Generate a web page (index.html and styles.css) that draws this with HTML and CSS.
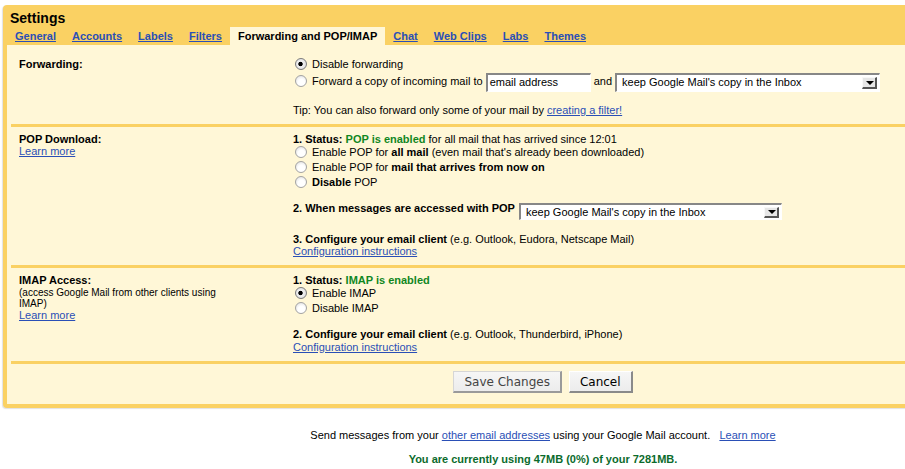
FILE: index.html
```html
<!DOCTYPE html>
<html>
<head>
<meta charset="utf-8">
<title>Settings</title>
<link rel="stylesheet" href="styles.css">
</head>
<body>
<div class="box">
  <h1 class="title">Settings</h1>
  <div class="tabs">
    <a class="tab" href="#">General</a>
    <a class="tab" href="#">Accounts</a>
    <a class="tab" href="#">Labels</a>
    <a class="tab" href="#">Filters</a>
    <span class="tab active">Forwarding and POP/IMAP</span>
    <a class="tab" href="#">Chat</a>
    <a class="tab" href="#">Web Clips</a>
    <a class="tab" href="#">Labs</a>
    <a class="tab" href="#">Themes</a>
  </div>
  <div class="panel">
    <div class="section sec-fwd">
      <div class="label l16"><b>Forwarding:</b></div>
      <div class="opts">
        <div class="row r16"><span class="radio on"></span>Disable forwarding</div>
        <div class="row r19"><span class="radio"></span>Forward a copy of incoming mail to <span class="field input-email">email address</span> and <span class="field select sel-fwd"><span class="sel-text">keep Google Mail's copy in the Inbox</span><span class="arrow"></span></span></div>
        <div class="tip">Tip: You can also forward only some of your mail by <a href="#">creating a filter!</a></div>
      </div>
    </div>

    <div class="section sec-pop">
      <div class="label">
        <div class="l12"><b>POP Download:</b></div>
        <div class="l12"><a href="#">Learn more</a></div>
      </div>
      <div class="opts">
        <div class="l12"><b>1. Status: <span class="ok">POP is enabled</span></b> for all mail that has arrived since 12:01</div>
        <div class="row r15"><span class="radio"></span>Enable POP for <b>all mail</b> (even mail that's already been downloaded)</div>
        <div class="row r15"><span class="radio"></span>Enable POP for <b>mail that arrives from now on</b></div>
        <div class="row r15"><span class="radio"></span><b>Disable</b> POP</div>
        <div class="pop-row">
          <b class="l13">2. When messages are accessed with POP</b>
          <span class="field select sel-pop"><span class="sel-text">keep Google Mail's copy in the Inbox</span><span class="arrow"></span></span>
        </div>
        <div class="l12 cfg"><b>3. Configure your email client</b> (e.g. Outlook, Eudora, Netscape Mail)</div>
        <div class="l12"><a href="#">Configuration instructions</a></div>
      </div>
    </div>

    <div class="section sec-imap">
      <div class="label">
        <div class="l12"><b>IMAP Access:</b></div>
        <div class="small">(access Google Mail from other clients using IMAP)</div>
        <div class="l12"><a href="#">Learn more</a></div>
      </div>
      <div class="opts">
        <div class="l12"><b>1. Status: <span class="ok">IMAP is enabled</span></b></div>
        <div class="row r15"><span class="radio on"></span>Enable IMAP</div>
        <div class="row r15"><span class="radio"></span>Disable IMAP</div>
        <div class="l13 cfg2"><b>2. Configure your email client</b> (e.g. Outlook, Thunderbird, iPhone)</div>
        <div class="l13"><a href="#">Configuration instructions</a></div>
      </div>
    </div>

    <div class="actions">
      <button class="btn btn-save" type="button">Save Changes</button>
      <button class="btn" type="button">Cancel</button>
    </div>
  </div>
</div>

<div class="footer">
  <div class="send">Send messages from your <a href="#">other email addresses</a> using your Google Mail account. &nbsp; <a href="#">Learn more</a></div>
  <div class="usage">You are currently using 47MB (0%) of your 7281MB.</div>
</div>
</body>
</html>
```

FILE: styles.css
```css
html, body {
  margin: 0;
  padding: 0;
  overflow: hidden;
  background: #fff;
}

body {
  font-family: "Liberation Sans", Arial, Helvetica, sans-serif;
  font-size: 11px;
  color: #000;
}

a {
  color: #2a4fb6;
  text-decoration: underline;
}

.box {
  width: 1072px;
  margin: 5px 0 0 3px;
  padding: 4px 4px 4px 4px;
  background: #fad163;
  border-radius: 4px;
  box-shadow: -1px 1px 1px rgba(0, 0, 0, 0.12);
}

.title {
  margin: 0;
  padding-left: 3px;
  font-size: 14px;
  line-height: 18px;
  font-weight: bold;
}

.tabs {
  display: flex;
  height: 18px;
  line-height: 18px;
  font-weight: bold;
}

.tab {
  padding: 0 8px;
  white-space: nowrap;
}

.tab.active {
  background: #fff7d7;
  color: #000;
}

.panel {
  background: #fff7d7;
}

.section {
  display: grid;
  grid-template-columns: 274px 1fr;
  margin: 0 4px;
  padding-left: 8px;
  border-bottom: 3px solid #fad163;
}

.sec-fwd {
  padding-top: 11px;
  padding-bottom: 6px;
}

.sec-pop {
  padding-top: 6px;
  padding-bottom: 8px;
}

.sec-imap {
  padding-top: 6px;
  padding-bottom: 7px;
}

.l12 { line-height: 12px; }
.l13 { line-height: 13px; }
.l16 { line-height: 16px; }

.row {
  display: block;
  white-space: nowrap;
}

.r15 { line-height: 15px; height: 15px; }
.r16 { line-height: 16px; height: 16px; }
.r19 { line-height: 19px; height: 19px; }

.radio {
  display: inline-block;
  box-sizing: border-box;
  width: 12px;
  height: 12px;
  margin: -2px 5px 0 2px;
  border-radius: 50%;
  border: 1px solid #a3a3a3;
  background: radial-gradient(circle at 55% 65%, #ffffff 0, #ffffff 40%, #ececec 70%, #cfcfcf 100%);
  vertical-align: middle;
}

.radio.on {
  border-color: #7d7d7d;
  background: radial-gradient(circle at 45% 50%, #000 0, #000 1.8px, #f2f2f2 2.6px, #e4e4e4 65%, #b8b8b8 100%);
}

.tip {
  margin-top: 11px;
  line-height: 16px;
}

.field {
  display: inline-flex;
  align-items: center;
  box-sizing: border-box;
  vertical-align: middle;
  background: #fff;
  border-style: solid;
  border-width: 2px 1px 1px 2px;
  border-color: #878787 #ffffff #ffffff #878787;
  font-size: 11px;
  line-height: 13px;
  white-space: nowrap;
}

.input-email {
  width: 105px;
  height: 19px;
  padding-left: 2px;
}

.select {
  justify-content: space-between;
  padding: 0 2px 0 5px;
}

.sel-fwd {
  width: 265px;
  height: 19px;
}

.sel-pop {
  width: 263px;
  height: 17px;
}

.arrow {
  position: relative;
  box-sizing: border-box;
  width: 15px;
  height: 12px;
  background: #e6e6e6;
  border-style: solid;
  border-width: 1px 2px 2px 1px;
  border-color: #f8f8f8 #555555 #555555 #f8f8f8;
}

.arrow::after {
  content: "";
  position: absolute;
  left: 3px;
  top: 3px;
  border-style: solid;
  border-width: 4px 4px 0 4px;
  border-color: #000 transparent transparent transparent;
}

.sel-pop .arrow {
  height: 11px;
}

.sel-pop .arrow::after {
  top: 2px;
}

.ok {
  color: #11871f;
}

.pop-row {
  display: flex;
  align-items: flex-start;
  gap: 4px;
  margin-top: 12px;
  height: 18px;
  white-space: nowrap;
}

.pop-row .select {
  margin-top: 1px;
}

.cfg {
  margin-top: 13px;
}

.cfg2 {
  margin-top: 12px;
}

.small {
  max-width: 215px;
  margin-top: 1px;
  font-size: 10px;
  line-height: 11px;
}

.actions {
  display: flex;
  justify-content: center;
  gap: 7px;
  margin: 0 4px;
  padding: 7px 0 11px;
}

.btn {
  box-sizing: border-box;
  height: 22px;
  margin: 0;
  padding: 0 10px;
  font-family: "DejaVu Sans", "Lucida Grande", sans-serif;
  font-size: 12px;
  line-height: 18px;
  color: #000;
  background: linear-gradient(#f6f6f6, #ececec);
  border-style: solid;
  border-width: 1px 2px 2px 1px;
  border-color: #ffffff #8a8a8a #8a8a8a #ffffff;
  border-radius: 0;
}

.btn-save {
  color: #444;
  border-color: #d6d6d6 #9a9a9a #9a9a9a #d6d6d6;
}

.footer {
  width: 1080px;
  margin-left: 3px;
  text-align: center;
}

.send {
  margin-top: 21px;
  line-height: 13px;
}

.usage {
  margin-top: 11px;
  line-height: 13px;
  font-weight: bold;
  color: #0b6b2c;
}
```
